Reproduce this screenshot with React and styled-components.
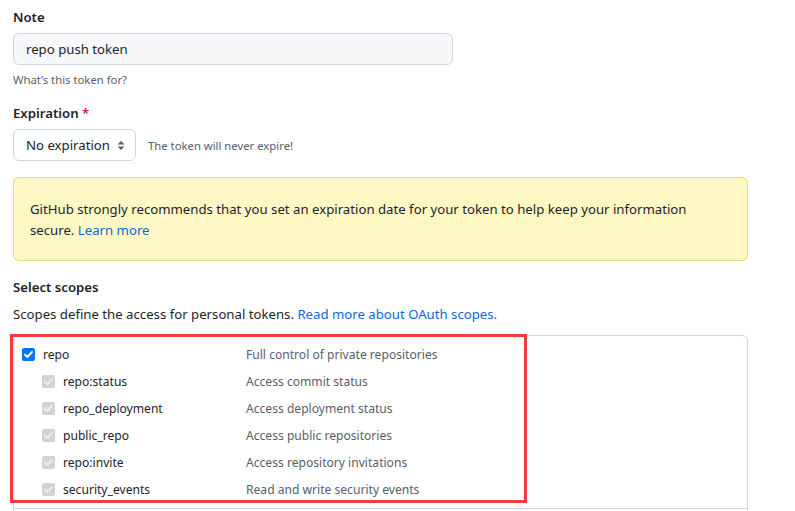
import React from "react";
import styled, { createGlobalStyle } from "styled-components";

const GlobalStyle = createGlobalStyle`
  html, body { margin: 0; background: #ffffff; }
  body {
    font-family: "Noto Sans", "Open Sans", sans-serif;
    font-size: 13.2px;
    line-height: 21px;
    color: #1f2328;
  }
`;

const Page = styled.div`
  width: 735px;
  padding: 7px 0 0 13px;
`;

const Group = styled.div`
  display: flex;
  flex-direction: column;
  margin-top: ${(p) => p.$mt || 0}px;
`;

const Label = styled.div`
  font-weight: 600;
  font-size: 13.2px;
  line-height: 21px;
`;

const Required = styled.span`
  color: #cf222e;
`;

const TextInput = styled.div`
  box-sizing: border-box;
  margin-top: 5px;
  width: 440px;
  height: 32px;
  padding: 0 12px;
  display: flex;
  align-items: center;
  background: #f6f8fa;
  border: 1px solid #d0d7de;
  border-radius: 6px;
  font-size: 13.2px;
`;

const Note = styled.div`
  margin-top: 6px;
  font-size: 11.3px;
  line-height: 18px;
  color: #57606a;
`;

const SelectRow = styled.div`
  margin-top: 5px;
  display: flex;
  align-items: center;
  gap: 12px;
`;

const Select = styled.div`
  box-sizing: border-box;
  width: 123px;
  height: 32px;
  padding: 0 10px 0 12px;
  display: flex;
  align-items: center;
  justify-content: space-between;
  background: #ffffff;
  border: 1px solid #d0d7de;
  border-radius: 6px;
  font-size: 13.2px;
`;

const Hint = styled.span`
  font-size: 11.3px;
  color: #57606a;
`;

const Flash = styled.div`
  box-sizing: border-box;
  margin-top: 16px;
  width: 735px;
  padding: 21px 16px 19px;
  background: #fff8c5;
  border: 1px solid rgba(212, 167, 44, 0.4);
  border-radius: 6px;
  line-height: 21px;
`;

const Link = styled.a`
  color: #0969da;
  text-decoration: none;
`;

const Para = styled.div`
  margin-top: 6px;
`;

const ScopeWrap = styled.div`
  position: relative;
  margin-top: 10px;
`;

const ScopeBox = styled.div`
  box-sizing: border-box;
  width: 735px;
  border: 1px solid #d0d7de;
  border-radius: 6px;
  padding-bottom: 40px;
`;

const ScopeGroup = styled.div`
  padding: 5px 0 5px 8px;
  border-bottom: 1px solid #d0d7de;
`;

const ScopeRow = styled.div`
  display: grid;
  grid-template-columns: 224px 1fr;
  align-items: center;
  height: 27px;
  font-size: 12.1px;
`;

const ScopeName = styled.div`
  display: flex;
  align-items: center;
  gap: 8px;
  padding-left: ${(p) => (p.$sub ? 20 : 0)}px;
  color: #1f2328;
`;

const ScopeDesc = styled.div`
  color: #57606a;
`;

const Highlight = styled.div`
  position: absolute;
  left: -3px;
  top: -1px;
  width: 517px;
  height: 169px;
  box-sizing: border-box;
  border: 3px solid #f53b3b;
  pointer-events: none;
`;

const Box = styled.svg`
  flex: none;
  display: block;
`;

function CheckBox({ disabled }) {
  return (
    <Box width="13" height="13" viewBox="0 0 13 13">
      <rect x="0" y="0" width="13" height="13" rx="2" fill={disabled ? "#d3d3d3" : "#0075ff"} />
      <path
        d="M3 6.7 L5.4 9 L10 4"
        fill="none"
        stroke={disabled ? "#ececec" : "#ffffff"}
        strokeWidth="1.9"
        strokeLinecap="round"
        strokeLinejoin="round"
      />
    </Box>
  );
}

function Arrows() {
  return (
    <Box width="8" height="11" viewBox="0 0 8 11">
      <path d="M0.5 4.5 L4 1 L7.5 4.5 Z" fill="#57606a" />
      <path d="M0.5 6.5 L4 10 L7.5 6.5 Z" fill="#57606a" />
    </Box>
  );
}

const scopes = [
  { name: "repo", desc: "Full control of private repositories" },
  { name: "repo:status", desc: "Access commit status", sub: true },
  { name: "repo_deployment", desc: "Access deployment status", sub: true },
  { name: "public_repo", desc: "Access public repositories", sub: true },
  { name: "repo:invite", desc: "Access repository invitations", sub: true },
  { name: "security_events", desc: "Read and write security events", sub: true },
];

export default function App() {
  return (
    <Page>
      <GlobalStyle />
      <Group>
        <Label>Note</Label>
        <TextInput>repo push token</TextInput>
        <Note>What’s this token for?</Note>
      </Group>

      <Group $mt={14}>
        <Label>
          Expiration <Required>*</Required>
        </Label>
        <SelectRow>
          <Select>
            <span>No expiration</span>
            <Arrows />
          </Select>
          <Hint>The token will never expire!</Hint>
        </SelectRow>
      </Group>

      <Flash>
        GitHub strongly recommends that you set an expiration date for your token to help keep your information
        secure. <Link href="#">Learn more</Link>
      </Flash>

      <Group $mt={16}>
        <Label>Select scopes</Label>
        <Para>
          Scopes define the access for personal tokens. <Link href="#">Read more about OAuth scopes.</Link>
        </Para>
      </Group>

      <ScopeWrap>
        <ScopeBox>
          <ScopeGroup>
            {scopes.map((s) => (
              <ScopeRow key={s.name}>
                <ScopeName $sub={s.sub}>
                  <CheckBox disabled={s.sub} />
                  {s.name}
                </ScopeName>
                <ScopeDesc>{s.desc}</ScopeDesc>
              </ScopeRow>
            ))}
          </ScopeGroup>
        </ScopeBox>
        <Highlight />
      </ScopeWrap>
    </Page>
  );
}
